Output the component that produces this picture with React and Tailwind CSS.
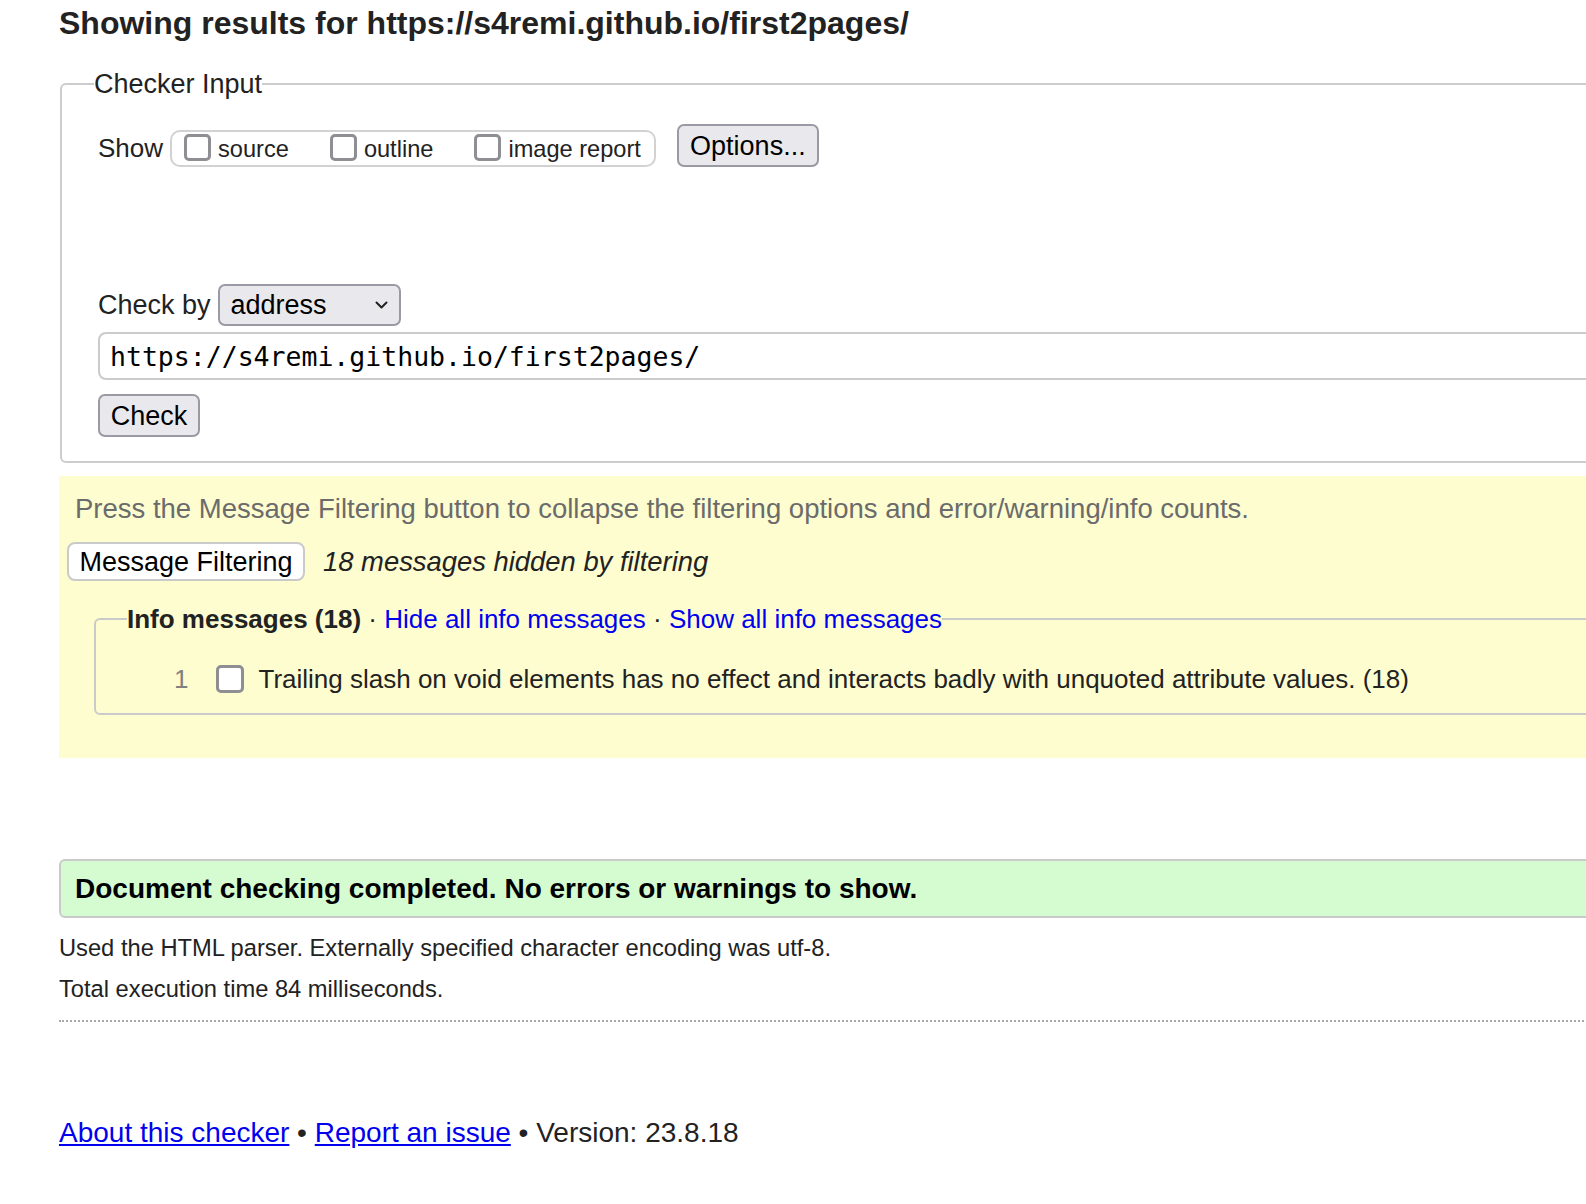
const font = { fontFamily: '"Liberation Sans", Arial, sans-serif' }

const Box = ({ big }) =>
  big ? (
    <span className="inline-block w-[28px] h-[28px] bg-white border-[3px] border-[#8e8e93] rounded-[5px]" />
  ) : (
    <span className="inline-block w-[27px] h-[27px] border-[3px] border-[#8e8e93] rounded-[5px] mb-[3px]" />
  )

const App = () => {
  const shows = ['source', 'outline', 'image report']

  return (
    <div className="w-screen overflow-hidden bg-white text-[#222]" style={font}>
      <div className="w-[1700px] pl-[59px] pt-[5px] pb-[60px]">
        <h2 className="text-[32px] leading-[36px] font-bold">
          Showing results for https://s4remi.github.io/first2pages/
        </h2>

        {/* Checker input */}
        <fieldset className="mt-[28px] ml-[1px] border-2 border-[#cdcdcd] rounded-[6px] pl-[36px] pt-[25px] pb-[24px]">
          <legend className="-ml-[4px] text-[27px] leading-[30px]">Checker Input</legend>

          <div className="flex items-end h-[43px]">
            <span className="text-[26px] leading-[37px] mr-[7px]">Show</span>
            <div className="flex items-center h-[37px] border-2 border-[#d2d2d2] rounded-[10px] pl-[12px] pr-[13px]">
              {shows.map((label, i) => (
                <span key={label} className={i > 0 ? 'flex items-center gap-[7px] ml-[41px]' : 'flex items-center gap-[7px]'}>
                  <Box />
                  <span className="text-[23.6px] leading-[30px]">{label}</span>
                </span>
              ))}
            </div>
            <button className="ml-[21px] h-[43px] w-[142px] bg-[#e9e9ed] border-2 border-[#9a9aa5] rounded-[7px] text-[27px] leading-[30px] text-black">
              Options...
            </button>
          </div>

          <div className="flex items-center mt-[117px] h-[42px]">
            <span className="text-[27px] leading-[30px]">Check by</span>
            <div className="ml-[7px] h-[42px] w-[183px] bg-[#e9e9ed] border-2 border-[#9a9aa5] rounded-[7px] flex items-center justify-between pl-[11px] pr-[11px] text-black">
              <span className="text-[27px] leading-[30px]">address</span>
              <svg width="13" height="9" viewBox="0 0 13 9" fill="none">
                <path d="M1.5 1.5l5 5 5-5" stroke="#222" strokeWidth="2" strokeLinecap="round" strokeLinejoin="round" />
              </svg>
            </div>
          </div>

          <input
            readOnly
            value="https://s4remi.github.io/first2pages/"
            className="block mt-[6px] w-full h-[48px] border-2 border-[#cbcbcb] rounded-[8px] pl-[10px] text-[26.5px] text-black outline-none"
            style={{ fontFamily: '"DejaVu Sans Mono", Menlo, monospace' }}
          />

          <button className="block mt-[14px] h-[43px] w-[102px] bg-[#e9e9ed] border-2 border-[#9a9aa5] rounded-[7px] text-[27px] leading-[30px] text-black">
            Check
          </button>
        </fieldset>

        {/* Filters */}
        <div className="mt-[13px] bg-[#fefdd0] pt-[18px] pb-[43px] px-[8px]">
          <p className="pl-[8px] text-[27.5px] leading-[30px] text-[#6b6b6b]">
            Press the Message Filtering button to collapse the filtering options and error/warning/info counts.
          </p>
          <div className="flex items-center mt-[18px]">
            <button className="h-[39px] w-[238px] bg-white border-2 border-[#cacaca] rounded-[8px] text-[27px] leading-[30px] text-black">
              Message Filtering
            </button>
            <span className="ml-[18px] text-[27.4px] leading-[30px] italic">18 messages hidden by filtering</span>
          </div>

          <fieldset className="mt-[23px] ml-[27px] border-2 border-[#cacaca] rounded-[6px] pl-[31px] pt-[27px] pb-[16px]">
            <legend className="text-[26px] leading-[30px]">
              <b>Info messages (18)</b>
              {' · '}
              <a href="#" className="text-[#0000ee]">Hide all info messages</a>
              {' · '}
              <a href="#" className="text-[#0000ee]">Show all info messages</a>
            </legend>
            <div className="flex items-center h-[36px] pl-[47px]">
              <span className="text-[26px] leading-[30px] text-[#808080]">1</span>
              <span className="ml-[28px] flex items-center">
                <Box big />
              </span>
              <span className="ml-[14px] text-[26px] leading-[30px]">
                Trailing slash on void elements has no effect and interacts badly with unquoted attribute values. (18)
              </span>
            </div>
          </fieldset>
        </div>

        {/* Result */}
        <div className="mt-[101px] h-[59px] bg-[#d5fbd0] border-2 border-[#cacaca] rounded-[6px] flex items-center pl-[14px]">
          <span className="text-[28px] leading-[32px] font-bold text-black">
            Document checking completed. No errors or warnings to show.
          </span>
        </div>

        <p className="mt-[15px] text-[23.7px] leading-[30px]">
          Used the HTML parser. Externally specified character encoding was utf-8.
        </p>
        <p className="mt-[11px] text-[23.7px] leading-[30px]">Total execution time 84 milliseconds.</p>

        <div className="mt-[16px] border-t-2 border-dotted border-[#a8a8a8]" />

        <p className="mt-[94px] text-[28px] leading-[34px]">
          <a href="#" className="text-[#0000ee] underline">About this checker</a>
          {' • '}
          <a href="#" className="text-[#0000ee] underline">Report an issue</a>
          {' • Version: 23.8.18'}
        </p>
      </div>
    </div>
  )
}

export default App
